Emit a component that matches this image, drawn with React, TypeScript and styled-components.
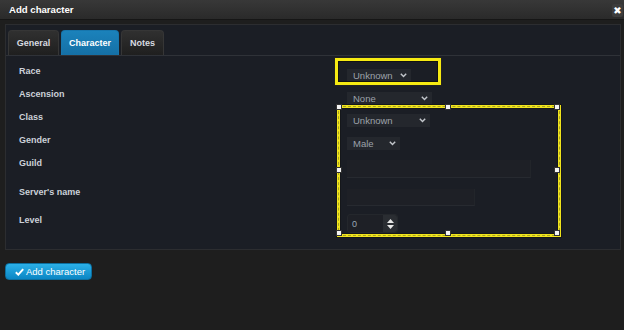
import React from "react";
import styled, { createGlobalStyle } from "styled-components";

const Global = createGlobalStyle`
  html, body { margin: 0; padding: 0; background: #1e1e1e; }
  body { width: 624px; height: 330px; overflow: hidden; font-family: "Liberation Sans", Arial, sans-serif; }
`;

const Page = styled.div`
  width: 624px;
  height: 330px;
  background: #1e1e1e;
  display: flex;
  flex-direction: column;
`;

const Header = styled.div`
  height: 20px;
  box-sizing: border-box;
  padding: 0 1px 0 9px;
  display: flex;
  align-items: center;
  justify-content: space-between;
  background: linear-gradient(#383838, #2a2a2a);
  border-bottom: 1px solid #161616;
`;

const Title = styled.div`
  color: #fff;
  font-weight: bold;
  font-size: 9.6px;
`;

const CloseBtn = styled.div`
  width: 11px;
  height: 13px;
  margin-top: 2px;
  background: #3c3c3c;
  border-radius: 2px;
  color: #fff;
  font-size: 10px;
  line-height: 13px;
  text-align: center;
  font-family: "DejaVu Sans", sans-serif;
  font-weight: bold;
`;

const Panel = styled.div`
  margin: 4px 3px 0 5px;
  height: 226px;
  box-sizing: border-box;
  border: 1px solid #2c2d30;
  background: #1b1e25;
  display: flex;
  flex-direction: column;
  position: relative;
`;

const TabStrip = styled.div`
  display: flex;
  gap: 2px;
  padding: 5px 0 0 2px;
  border-bottom: 1px solid #2f3238;
  height: 31px;
  box-sizing: border-box;
`;

const Tab = styled.div<{ $active?: boolean; $w: number }>`
  width: ${(p) => p.$w}px;
  height: 25px;
  box-sizing: border-box;
  border-radius: 4px 4px 0 0;
  display: flex;
  align-items: center;
  justify-content: center;
  font-size: 9px;
  font-weight: bold;
  color: ${(p) => (p.$active ? "#ffffff" : "#d8dbe0")};
  background: ${(p) =>
    p.$active ? "linear-gradient(#1b82bb, #1570a6)" : "linear-gradient(#303030, #1f1f1f)"};
  border: 1px solid ${(p) => (p.$active ? "#1776ad" : "#363636")};
  border-bottom: none;
`;

const Form = styled.div`
  padding: 9px 0 0 13px;
  display: flex;
  flex-direction: column;
`;

const Row = styled.div<{ $h: number }>`
  display: grid;
  grid-template-columns: 328px 1fr;
  height: ${(p) => p.$h}px;
  align-items: start;
`;

const Label = styled.div`
  color: #ccd1d9;
  font-size: 9px;
  font-weight: bold;
  line-height: 12px;
`;

const Control = styled.div<{ $off: number }>`
  margin-top: ${(p) => p.$off}px;
  display: flex;
`;

const Select = styled.div<{ $w: number }>`
  width: ${(p) => p.$w}px;
  height: 13px;
  box-sizing: border-box;
  background: #24272d;
  color: #9da2aa;
  font-size: 9.5px;
  padding: 0 4px 0 6px;
  display: flex;
  align-items: center;
  justify-content: space-between;
`;

const Input = styled.div<{ $w: number; $h: number }>`
  width: ${(p) => p.$w}px;
  height: ${(p) => p.$h}px;
  box-sizing: border-box;
  background: #1e2026;
  border-bottom: 1px solid #272a30;
  border-right: 1px solid #22252a;
`;

const NumberBox = styled.div`
  width: 51px;
  height: 19px;
  box-sizing: border-box;
  background: #1e2026;
  border: 1px solid #24272c;
  border-radius: 3px;
  display: flex;
  color: #9aa7b5;
  font-size: 9px;
`;

const NumValue = styled.div`
  flex: 1;
  display: flex;
  align-items: center;
  padding-left: 4px;
`;

const Spinner = styled.div`
  width: 14px;
  background: #2a2d32;
  border-radius: 0 3px 3px 0;
  display: flex;
  flex-direction: column;
  align-items: center;
  justify-content: center;
  gap: 2px;
`;

const Highlight = styled.div`
  position: absolute;
  left: 329px;
  top: 33px;
  width: 106px;
  height: 27px;
  box-sizing: border-box;
  border: 3px solid #f6ea12;
  box-shadow: inset 0 0 0 1px #121212, 0 0 0 1px #222;
`;

const Selection = styled.div`
  position: absolute;
  left: 331px;
  top: 80px;
  width: 224px;
  height: 132px;
  box-sizing: border-box;
  border: 3px solid #f0e41c;
  box-shadow: 0 0 0 1px #15171b, inset 0 0 0 1px #15171b;
  &::after {
    content: "";
    position: absolute;
    inset: -2px;
    border: 1px dashed rgba(110, 105, 40, 0.55);
  }
`;

const Handle = styled.div<{ $x: string; $y: string }>`
  position: absolute;
  width: 4px;
  height: 4px;
  background: #f4f4f4;
  border: 1px solid #333;
  left: ${(p) => p.$x};
  top: ${(p) => p.$y};
  transform: translate(-50%, -50%);
  z-index: 2;
  margin-left: -1.5px;
  margin-top: -1.5px;
`;

const Footer = styled.div`
  padding: 13px 0 0 5px;
`;

const Button = styled.div`
  width: 87px;
  height: 17px;
  box-sizing: border-box;
  border-radius: 4px;
  border: 1px solid #0c6f9f;
  background: linear-gradient(#2bb0e8, #0b86c4);
  color: #fff;
  font-size: 9.5px;
  display: flex;
  align-items: center;
  gap: 2px;
  padding-left: 9px;
`;

const Chevron = () => (
  <svg width="7" height="5" viewBox="0 0 7 5">
    <path d="M0.8 0.8 L3.5 3.6 L6.2 0.8" fill="none" stroke="#c3c7cc" strokeWidth="1.4" />
  </svg>
);

const Check = () => (
  <svg width="9" height="8" viewBox="0 0 9 8">
    <path d="M0.8 4.2 L3.3 6.6 L8.2 1.2" fill="none" stroke="#fff" strokeWidth="2" />
  </svg>
);

const handles: [string, string][] = [
  ["0%", "0%"],
  ["50%", "0%"],
  ["100%", "0%"],
  ["0%", "50%"],
  ["100%", "50%"],
  ["0%", "100%"],
  ["50%", "100%"],
  ["100%", "100%"],
];

export default function App() {
  return (
    <Page>
      <Global />
      <Header>
        <Title>Add character</Title>
        <CloseBtn>✖</CloseBtn>
      </Header>
      <Panel>
        <TabStrip>
          <Tab $w={51}>General</Tab>
          <Tab $w={58} $active>
            Character
          </Tab>
          <Tab $w={43}>Notes</Tab>
        </TabStrip>
        <Form>
          <Row $h={23}>
            <Label>Race</Label>
            <Control $off={4}>
              <Select $w={64}>
                Unknown <Chevron />
              </Select>
            </Control>
          </Row>
          <Row $h={23}>
            <Label>Ascension</Label>
            <Control $off={4}>
              <Select $w={85}>
                None <Chevron />
              </Select>
            </Control>
          </Row>
          <Row $h={23}>
            <Label>Class</Label>
            <Control $off={3}>
              <Select $w={83}>
                Unknown <Chevron />
              </Select>
            </Control>
          </Row>
          <Row $h={23}>
            <Label>Gender</Label>
            <Control $off={3}>
              <Select $w={53}>
                Male <Chevron />
              </Select>
            </Control>
          </Row>
          <Row $h={29}>
            <Label>Guild</Label>
            <Control $off={3}>
              <Input $w={184} $h={18} />
            </Control>
          </Row>
          <Row $h={28}>
            <Label>Server's name</Label>
            <Control $off={3}>
              <Input $w={128} $h={17} />
            </Control>
          </Row>
          <Row $h={28}>
            <Label>Level</Label>
            <Control $off={0}>
              <NumberBox>
                <NumValue>0</NumValue>
                <Spinner>
                  <svg width="7" height="4" viewBox="0 0 7 4">
                    <path d="M0 4 L3.5 0 L7 4 Z" fill="#e8e8e8" />
                  </svg>
                  <svg width="7" height="4" viewBox="0 0 7 4">
                    <path d="M0 0 L3.5 4 L7 0 Z" fill="#e8e8e8" />
                  </svg>
                </Spinner>
              </NumberBox>
            </Control>
          </Row>
        </Form>
        <Highlight />
        <Selection>
          {handles.map(([x, y], i) => (
            <Handle key={i} $x={x} $y={y} />
          ))}
        </Selection>
      </Panel>
      <Footer>
        <Button>
          <Check />
          Add character
        </Button>
      </Footer>
    </Page>
  );
}
